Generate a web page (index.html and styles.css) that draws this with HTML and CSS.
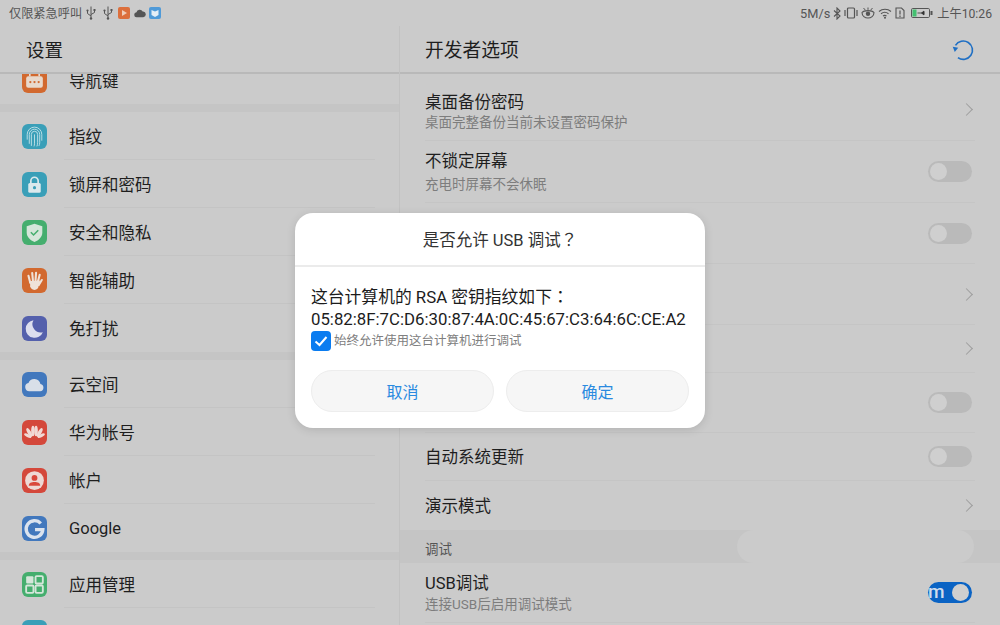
FILE: index.html
```html
<!DOCTYPE html>
<html lang="zh">
<head>
<meta charset="utf-8">
<title>开发者选项</title>
<link rel="stylesheet" href="styles.css">
</head>
<body>
<div class="screen">
  <header class="status">
    <div class="status-left">
      <span>仅限紧急呼叫</span>
      <svg class="usb" viewBox="0 0 12 14"><path d="M6 0.500V13M6 10L2.500 7.500V5M6 8.500L9.500 6.500V4.500" fill="none" stroke="#555" stroke-width="1"/><circle cx="2.500" cy="4.500" r="1.100" fill="#555"/><rect x="8.500" y="3" width="2" height="2" fill="#555"/><circle cx="6" cy="12.500" r="1.200" fill="#555"/></svg>
      <svg class="usb" viewBox="0 0 12 14"><path d="M6 0.500V13M6 10L2.500 7.500V5M6 8.500L9.500 6.500V4.500" fill="none" stroke="#555" stroke-width="1"/><circle cx="2.500" cy="4.500" r="1.100" fill="#555"/><rect x="8.500" y="3" width="2" height="2" fill="#555"/><circle cx="6" cy="12.500" r="1.200" fill="#555"/></svg>
      <svg class="app" viewBox="0 0 12 12"><rect width="12" height="12" rx="2" fill="#dc6f3c"/><path d="M4 3l5 3-5 3z" fill="#f0cdb8"/></svg>
      <svg class="cloud" viewBox="0 0 13 10"><path d="M3 9.500a2.600 2.600 0 0 1-.3-5.200A3.600 3.600 0 0 1 9.400 3.400 3 3 0 0 1 10 9.500z" fill="#555"/></svg>
      <svg class="app" viewBox="0 0 12 12"><rect width="12" height="12" rx="2" fill="#4f9ad8"/><path d="M2.500 3L6 4.500 9.500 3V8L6 10 2.500 8z" fill="#e4eef6"/></svg>
    </div>
    <div class="status-right">
      <span class="speed">5M/s</span>
      <svg class="si" viewBox="0 0 8 13"><path d="M1 3.500l6 5.500-3 3V1l3 3-6 5.500" fill="none" stroke="#555" stroke-width="1.100"/></svg>
      <svg class="si-w" viewBox="0 0 14 12"><rect x="3.500" y="1" width="7" height="10" rx="1" fill="none" stroke="#555" stroke-width="1.200"/><path d="M1 3v6M13 3v6" stroke="#555" stroke-width="1.200"/></svg>
      <svg class="si-w" viewBox="0 0 14 12"><path d="M1 5.500C3 3 11 3 13 5.500 13 9 10 11 7 11S1 9 1 5.500z" fill="none" stroke="#555" stroke-width="1.100"/><circle cx="7" cy="6.800" r="2.200" fill="#555"/><path d="M2.500 1l2 2.300M7 .5v2.300M11.500 1l-2 2.300" stroke="#555"/></svg>
      <svg class="si-w" viewBox="0 0 14 12"><path d="M1 4.500a9 9 0 0 1 12 0M3 6.800a6 6 0 0 1 7.500 0M5 9a3 3 0 0 1 3.500 0" fill="none" stroke="#555" stroke-width="1.100"/><circle cx="7" cy="10.700" r="1" fill="#555"/></svg>
      <svg class="si-s" viewBox="0 0 10 12"><path d="M1 1h5.500L9 3.500V11H1z" fill="none" stroke="#555" stroke-width="1.100"/><path d="M5 3.500v4M5 8.500v1.500" stroke="#555" stroke-width="1.200"/></svg>
      <svg class="batt" viewBox="0 0 22 10"><rect x=".5" y=".5" width="18" height="9" rx="1.200" fill="none" stroke="#555"/><rect x="1.500" y="1.500" width="4" height="7" fill="#43c070"/><rect x="19.500" y="3" width="2" height="4" fill="#555"/><path d="M6.500 5h7M13 3l-2.500 2 2.500 2z" stroke="#333" fill="#333" stroke-width=".8"/></svg>
      <span>上午10:26</span>
    </div>
  </header>

  <div class="panes">
    <aside class="left">
      <h1 class="pane-title">设置</h1>
      <div class="left-scroll">
        <div class="nav-row nav-row-clipped">
          <span class="ico ico-orange"><svg viewBox="0 0 24 24"><rect x="4" y="8" width="16" height="11" rx="2" fill="#e8d9cc"/><path d="M7.500 8V4M16.500 8V4" stroke="#e8d9cc" stroke-width="1.600"/><circle cx="8" cy="13.500" r="1.100" fill="#d2692f"/><circle cx="12" cy="13.500" r="1.100" fill="#d2692f"/><circle cx="16" cy="13.500" r="1.100" fill="#d2692f"/></svg></span>
          <span class="nav-label">导航键</span>
        </div>
        <div class="band"></div>
        <div class="nav-row">
          <span class="ico ico-teal"><svg viewBox="0 0 24 24" fill="none" stroke="#bfe0e6" stroke-width=".9"><path d="M5 15v-5a7 7 0 0 1 14 0v6"/><path d="M7 19v-9a5 5 0 0 1 10 0v8c0 1-.3 2-.7 3"/><path d="M9 21v-11a3 3 0 0 1 6 0v8c0 1.500-.3 2.500-.7 3.500"/><path d="M12 10v9c0 1-.2 1.800-.5 2.500"/></svg></span>
          <span class="nav-label">指纹</span>
        </div>
        <div class="nav-row">
          <span class="ico ico-teal"><svg viewBox="0 0 24 24"><path d="M8.500 11V8.500a3.500 3.500 0 0 1 7 0V11" fill="none" stroke="#dbe9ec" stroke-width="1.600"/><rect x="6" y="10.500" width="12" height="9.500" rx="1.500" fill="#dbe9ec"/><circle cx="12" cy="15" r="1.500" fill="#3a9fb8"/></svg></span>
          <span class="nav-label">锁屏和密码</span>
        </div>
        <div class="nav-row">
          <span class="ico ico-green"><svg viewBox="0 0 24 24"><path d="M12 3.500l7.500 2.500v6c0 4.500-3.500 7.500-7.500 9-4-1.500-7.500-4.500-7.500-9V6z" fill="#d5e6da"/><path d="M8.500 11.800l2.600 2.600 4.500-4.500" fill="none" stroke="#45ae6e" stroke-width="1.500"/></svg></span>
          <span class="nav-label">安全和隐私</span>
        </div>
        <div class="nav-row">
          <span class="ico ico-orange"><svg viewBox="0 0 24 24" fill="none" stroke="#efe2d8" stroke-linecap="round"><path d="M8 14.500L6.200 7.500M10.500 12L9.800 4.800M13 12l.5-7.500M15.300 13l1.700-6.500" stroke-width="2"/><path d="M8 13.500l8-.5-.3 4L19 11.500" stroke-width="2"/><path d="M7.800 13h8v4.500c0 2-1.500 3.500-3.800 3.500-2.600 0-3.500-1.500-4.200-3.500z" fill="#efe2d8" stroke="none"/></svg></span>
          <span class="nav-label">智能辅助</span>
        </div>
        <div class="nav-row nav-row-last">
          <span class="ico ico-indigo"><svg viewBox="0 0 24 24"><path d="M11 4a8.500 8.500 0 1 0 9 11.500A8 8 0 0 1 11 4z" fill="#dcdeee"/></svg></span>
          <span class="nav-label">免打扰</span>
        </div>
        <div class="band"></div>
        <div class="nav-row">
          <span class="ico ico-blue"><svg viewBox="0 0 24 24"><path d="M7 18.500a4 4 0 0 1-.8-7.900 6 6 0 0 1 11.500.8 3.600 3.600 0 0 1-.3 7.100z" fill="#d9dfe8"/></svg></span>
          <span class="nav-label">云空间</span>
        </div>
        <div class="nav-row">
          <span class="ico ico-red"><svg viewBox="0 0 24 24" fill="#f1d9d5"><ellipse cx="10.500" cy="10.500" rx="1.700" ry="5"/><ellipse cx="13.500" cy="10.500" rx="1.700" ry="5"/><ellipse cx="7" cy="12" rx="1.700" ry="4.800" transform="rotate(-30 7 12)"/><ellipse cx="17" cy="12" rx="1.700" ry="4.800" transform="rotate(30 17 12)"/><ellipse cx="5.500" cy="15" rx="1.500" ry="3.800" transform="rotate(-62 5.500 15)"/><ellipse cx="18.500" cy="15" rx="1.500" ry="3.800" transform="rotate(62 18.500 15)"/></svg></span>
          <span class="nav-label">华为帐号</span>
        </div>
        <div class="nav-row">
          <span class="ico ico-red"><svg viewBox="0 0 24 24"><circle cx="12" cy="12" r="9" fill="#edd9d5"/><circle cx="12" cy="9.500" r="2.800" fill="#d9483b"/><path d="M6.500 17c0-2.500 2.500-3.500 5.500-3.500s5.500 1 5.500 3.500z" fill="#d9483b"/></svg></span>
          <span class="nav-label">帐户</span>
        </div>
        <div class="nav-row nav-row-last">
          <span class="ico ico-blue"><svg viewBox="0 0 24 24"><path d="M18 7.200A8 8 0 1 0 20 13h-7.500" fill="none" stroke="#dbe3ee" stroke-width="3.200"/></svg></span>
          <span class="nav-label nav-latin">Google</span>
        </div>
        <div class="band"></div>
        <div class="nav-row">
          <span class="ico ico-green"><svg viewBox="0 0 24 24"><rect x="4" y="4" width="7" height="7" rx="1" fill="#d5e6da"/><rect x="13" y="4" width="7" height="7" rx="1" fill="none" stroke="#d5e6da" stroke-width="1.800"/><rect x="4" y="13" width="7" height="7" rx="1" fill="none" stroke="#d5e6da" stroke-width="1.800"/><rect x="13" y="13" width="7" height="7" rx="1" fill="none" stroke="#d5e6da" stroke-width="1.800"/></svg></span>
          <span class="nav-label">应用管理</span>
        </div>
        <div class="nav-row">
          <span class="ico ico-teal"></span>
          <span class="nav-label"></span>
        </div>
      </div>
    </aside>

    <main class="right">
      <div class="right-head">
        <h1 class="pane-title pane-title-wide">开发者选项</h1>
        <svg class="reset" viewBox="0 0 24 24"><path d="M3.800 7A10 10 0 1 1 6.500 20.300" fill="none" stroke="#1f6fc4" stroke-width="1.800"/><path d="M.8 8.500L6.800 9.500 3 14.300z" fill="#1f6fc4"/></svg>
      </div>
      <div class="right-list">
        <div class="set-row h67 first">
          <div class="set-text tight"><div class="set-title">桌面备份密码</div><div class="set-sub">桌面完整备份当前未设置密码保护</div></div>
          <span class="chev"></span>
        </div>
        <div class="set-row h62">
          <div class="set-text wide"><div class="set-title">不锁定屏幕</div><div class="set-sub">充电时屏幕不会休眠</div></div>
          <span class="tog"></span>
        </div>
        <div class="set-row h61"><div class="set-text"></div><span class="tog"></span></div>
        <div class="set-row h61"><div class="set-text"></div><span class="chev"></span></div>
        <div class="set-row h48"><div class="set-text"></div><span class="chev"></span></div>
        <div class="set-row h60"><div class="set-text"></div><span class="tog"></span></div>
        <div class="set-row h48"><div class="set-text"><div class="set-title">自动系统更新</div></div><span class="tog"></span></div>
        <div class="set-row h49 no-line"><div class="set-text"><div class="set-title">演示模式</div></div><span class="chev"></span></div>
        <div class="section-band">
          <span>调试</span>
          <span class="toast-ghost"></span>
        </div>
        <div class="set-row h60">
          <div class="set-text tight"><div class="set-title">USB调试</div><div class="set-sub">连接USB后启用调试模式</div></div>
          <span class="tog tog-on"><span class="tog-m">m</span></span>
        </div>
      </div>
    </main>
  </div>

  <div class="dialog">
    <div class="dlg-title" lang="zh-Hant">是否允许 USB 调试？</div>
    <div class="dlg-body">
      <p class="dlg-msg" lang="zh-Hant">这台计算机的 RSA 密钥指纹如下：<br>05:82:8F:7C:D6:30:87:4A:0C:45:67:C3:64:6C:CE:A2</p>
      <div class="dlg-check">
        <span class="box"><svg viewBox="0 0 20 20"><path d="M4.500 10.500l4 3.500 7-8" fill="none" stroke="#fff" stroke-width="2"/></svg></span>
        <span>始终允许使用这台计算机进行调试</span>
      </div>
      <div class="dlg-actions">
        <button class="btn">取消</button>
        <button class="btn">确定</button>
      </div>
    </div>
  </div>
</div>
</body>
</html>
```
FILE: styles.css
```css
* { box-sizing: border-box; }
html, body { margin: 0; padding: 0; }
body {
  font-family: "Roboto", "Noto Sans CJK SC", sans-serif;
  color: #1c1c1c;
  background: #cbcbcb;
}
.screen {
  position: relative;
  width: 1000px;
  height: 625px;
  overflow: hidden;
  background: #cbcbcb;
}
.status {
  height: 26px;
  padding: 0 8px 0 9px;
  display: flex;
  justify-content: space-between;
  align-items: center;
  font-size: 12.200px;
  color: #555;
}
.status-left { display: flex; align-items: center; gap: 3px; }
.status-right { display: flex; align-items: center; gap: 3px; }
.speed { font-size: 12.800px; }
.usb { width: 12px; height: 14px; margin-right: 2px; }
.app { width: 12px; height: 12px; margin-left: -1px; }
.cloud { width: 12px; height: 10px; margin: 0 1px; }
.si { width: 8px; height: 13px; }
.si-w { width: 14px; height: 12px; }
.si-s { width: 10px; height: 12px; }
.batt { width: 22px; height: 10px; margin: 0 1px 0 3px; }

.panes { display: flex; height: 599px; }
.left { width: 400px; border-right: 1px solid #c2c2c2; }
.right { flex: 1; }
.pane-title {
  margin: 0;
  padding-top: 2px;
  font-size: 18.500px;
  font-weight: 400;
  line-height: 46px;
  color: #1e1e1e;
  height: 48px;
}
.pane-title-wide { font-size: 18.800px; }
.left > .pane-title { padding-left: 26px; border-bottom: 2px solid #b9b9b9; }
.left-scroll { height: 551px; overflow: hidden; }
.nav-row {
  height: 48px;
  display: flex;
  align-items: center;
  padding-left: 22px;
  position: relative;
}
.nav-row-clipped { margin-top: -18px; }
.nav-row::after {
  content: "";
  position: absolute;
  left: 64px;
  right: 24px;
  bottom: 0;
  height: 1px;
  background: #c4c4c4;
}
.nav-row-clipped::after, .nav-row-last::after { display: none; }
.ico {
  flex: none;
  width: 25px;
  height: 25px;
  border-radius: 6px;
  display: block;
}
.ico svg { display: block; width: 25px; height: 25px; }
.ico-orange { background: #d2692f; }
.ico-teal { background: #3a9fb8; }
.ico-green { background: #45ae6e; }
.ico-indigo { background: #5460ac; }
.ico-blue { background: #4278bd; }
.ico-red { background: #d4483b; }
.nav-label { margin-left: 22px; font-size: 16.500px; color: #1e1e1e; }
.band { height: 8px; background: #c5c5c5; }

.right-head {
  height: 48px;
  display: flex;
  align-items: flex-start;
  justify-content: space-between;
  padding: 0 26px 0 25px;
  border-bottom: 2px solid #b9b9b9;
}
.reset { width: 22px; height: 22px; margin-top: 13px; }
.right-list { height: 551px; overflow: hidden; }
.set-row {
  display: flex;
  align-items: center;
  justify-content: space-between;
  margin: 0 25px 0 25px;
  border-bottom: 1px solid #c5c5c5;
}
.first { padding-top: 5px; }
.no-line { border-bottom: 0; }
.h48 { height: 48px; }
.h49 { height: 49px; }
.h60 { height: 60px; }
.h61 { height: 61px; }
.h62 { height: 62px; }
.h67 { height: 67px; }
.set-text { padding-top: 2px; }
.set-title { font-size: 16.500px; line-height: 22px; color: #1e1e1e; }
.set-sub { font-size: 13.500px; line-height: 20px; color: #7d7d7d; }
.tight .set-sub { margin-top: -1px; }
.first .set-text { padding-top: 4px; }
.first .set-sub { margin-top: -2px; }
.wide .set-sub { margin-top: 1px; }
.chev {
  width: 9px;
  height: 9px;
  margin-right: 4px;
  border-top: 1.500px solid #9e9e9e;
  border-right: 1.500px solid #9e9e9e;
  transform: rotate(45deg);
}
.tog {
  position: relative;
  display: block;
  width: 44px;
  height: 21px;
  margin-right: 3px;
  border-radius: 11px;
  background: #bababa;
}
.tog::after {
  content: "";
  position: absolute;
  left: 2px;
  top: 2px;
  width: 17px;
  height: 17px;
  border-radius: 50%;
  background: #cfcfcf;
}
.tog-on { background: #0a63c4; overflow: visible; }
.tog-on::after { left: auto; right: 3px; }
.tog-m {
  position: absolute;
  left: 0;
  top: -1px;
  font-size: 19px;
  font-weight: 500;
  line-height: 22px;
  color: #cfdcec;
}
.section-band {
  position: relative;
  height: 33px;
  background: #c5c5c5;
  padding: 6px 25px 0;
  font-size: 13.500px;
  line-height: 26px;
  color: #555;
}
.toast-ghost {
  position: absolute;
  left: 337px;
  top: 0;
  width: 237px;
  height: 33px;
  border-radius: 17px;
  background: #cbcbcb;
}

.dialog {
  position: absolute;
  left: 295px;
  top: 213px;
  width: 410px;
  height: 215px;
  border-radius: 18px;
  background: #fff;
  box-shadow: 0 2px 10px rgba(0, 0, 0, .12);
}
.dlg-title {
  height: 54px;
  padding-top: 1px;
  line-height: 53px;
  text-align: center;
  font-family: "Roboto", "Noto Sans CJK TC", sans-serif;
  font-size: 16.500px;
  color: #333;
  border-bottom: 2px solid #ebebeb;
}
.dlg-body { padding: 20px 16px 0; }
.dlg-msg {
  margin: 0;
  font-family: "Roboto", "Noto Sans CJK TC", sans-serif;
  font-size: 16.800px;
  line-height: 21.500px;
  color: #1c1c1c;
  white-space: nowrap;
}
.dlg-check {
  display: flex;
  align-items: center;
  gap: 3px;
  margin-top: 1px;
  font-size: 12.500px;
  line-height: 20px;
  color: #808080;
}
.box {
  width: 20px;
  height: 20px;
  border-radius: 4px;
  background: #0a7cf0;
  display: block;
}
.box svg { display: block; width: 20px; height: 20px; }
.dlg-actions { display: flex; justify-content: space-between; margin-top: 19px; }
.btn {
  width: 183px;
  height: 42px;
  border: 1px solid #ededed;
  border-radius: 21px;
  background: #f6f6f6;
  font-family: inherit;
  font-size: 16px;
  color: #2a8ae0;
  padding: 0;
}
```
